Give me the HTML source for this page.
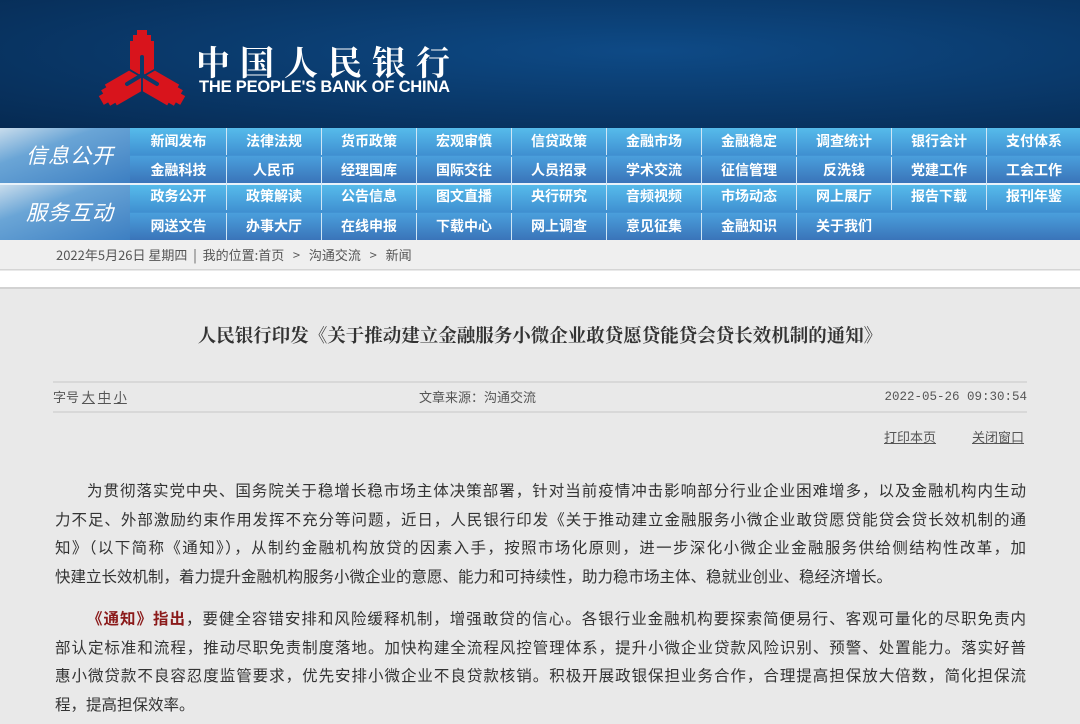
<!DOCTYPE html>
<html><head><meta charset="utf-8">
<style>
*{margin:0;padding:0;box-sizing:border-box}
body{width:1080px;height:724px;overflow:hidden;background:#e9e9e9;font-family:"Liberation Sans","Noto Sans CJK SC",sans-serif;color:#333}
.hdr{position:absolute;left:0;top:0;width:1080px;height:128px;background:radial-gradient(ellipse at 60% 40%,#0e4a86 0%,#0a3a6c 50%,#062a52 100%)}
.cn{position:absolute;left:196px;top:36px;color:#fff;font-family:"Noto Serif CJK SC",serif;font-size:34px;font-weight:bold;letter-spacing:10px;white-space:nowrap}
.en{position:absolute;left:199px;top:78px;color:#fff;font-size:16.5px;font-weight:bold;white-space:nowrap;letter-spacing:-0.2px}
.nav{position:absolute;left:0;width:1080px;height:55px;background:linear-gradient(#56bbeb,#3f8fd0 50%,#4a9fdc 51%,#3a74b9)}
.lbl{position:absolute;left:0;top:0;width:130px;height:55px;background:linear-gradient(160deg,#c8dcec 0%,#6aa5d6 35%,#3d7fc2 100%);color:#fff;font-size:21px;font-style:italic;line-height:55px;padding-left:26px;letter-spacing:1px;font-family:"Noto Sans CJK SC",sans-serif}
.cell{position:absolute;width:95px;height:27px;line-height:27px;text-align:center;color:#fff;font-size:14px;font-weight:bold;font-family:"Noto Sans CJK SC",sans-serif;border-left:1px solid #cfe6f6}
.crumb{position:absolute;left:0;top:240px;width:1080px;height:30px;background:#efefef;border-bottom:1px solid #d5d5d5;font-size:13px;color:#555;line-height:30px;padding-left:56px;font-family:"Noto Sans CJK SC",sans-serif}
.white{position:absolute;left:0;top:271px;width:1080px;height:18px;background:#fff;border-bottom:2px solid #d2d2d2}
.title{position:absolute;left:0;top:322px;width:1080px;text-align:center;font-family:"Noto Serif CJK SC",serif;font-weight:bold;font-size:18.5px;color:#333}
.meta{position:absolute;left:53px;top:381px;width:974px;height:32px;border-top:2px solid #d8d8d8;border-bottom:2px solid #d8d8d8;font-size:13px;color:#555;line-height:28px;font-family:"Noto Sans CJK SC",sans-serif}
.links{position:absolute;top:427px;font-size:13px;color:#555;text-decoration:underline;font-family:"Noto Sans CJK SC",sans-serif}
.p{position:absolute;left:55px;width:971px;font-family:"Noto Sans CJK SC",sans-serif;font-size:15.5px;color:#333}
.p div{height:28.5px;line-height:28.5px;text-align:justify;text-align-last:justify;white-space:nowrap;overflow:hidden}
.p div.l{text-align-last:left}
b.r{color:#8b1a1a}
</style></head><body>
<div class="hdr">
<svg style="position:absolute;left:95px;top:27px" width="95" height="85" viewBox="-47 -50 95 85">
<g fill="#d8141c">
<path id="a" d="M-5,-47 H5 V-42 H9 V-36 H12 V-8 L0,-1 L-12,-8 V-36 H-9 V-42 H-5 Z"/>
<use href="#a" transform="rotate(120)"/>
<use href="#a" transform="rotate(240)"/>
</g>
<g stroke="#0b3a6a" stroke-width="4" stroke-linecap="round" fill="none">
<path d="M0,-2 V-20"/><path d="M0,-2 L15,7"/><path d="M0,-2 L-15,7"/>
</g>
</svg>
<div class="cn">中国人民银行</div>
<div class="en">THE PEOPLE'S BANK OF CHINA</div>
</div>

<div class="nav" style="top:128px"><div class="lbl">信息公开</div>
<div class="cell" style="left:131px;top:0;border-left:none">新闻发布</div><div class="cell" style="left:226px;top:0">法律法规</div><div class="cell" style="left:321px;top:0">货币政策</div><div class="cell" style="left:416px;top:0">宏观审慎</div><div class="cell" style="left:511px;top:0">信贷政策</div><div class="cell" style="left:606px;top:0">金融市场</div><div class="cell" style="left:701px;top:0">金融稳定</div><div class="cell" style="left:796px;top:0">调查统计</div><div class="cell" style="left:891px;top:0">银行会计</div><div class="cell" style="left:986px;top:0">支付体系</div>
<div class="cell" style="left:131px;top:29px;border-left:none">金融科技</div><div class="cell" style="left:226px;top:29px">人民币</div><div class="cell" style="left:321px;top:29px">经理国库</div><div class="cell" style="left:416px;top:29px">国际交往</div><div class="cell" style="left:511px;top:29px">人员招录</div><div class="cell" style="left:606px;top:29px">学术交流</div><div class="cell" style="left:701px;top:29px">征信管理</div><div class="cell" style="left:796px;top:29px">反洗钱</div><div class="cell" style="left:891px;top:29px">党建工作</div><div class="cell" style="left:986px;top:29px">工会工作</div>
</div>
<div style="position:absolute;left:0;top:183px;width:1080px;height:2px;background:#e8f2fa"></div>
<div class="nav" style="top:185px"><div class="lbl">服务互动</div>
<div class="cell" style="left:131px;top:-2px;border-left:none">政务公开</div><div class="cell" style="left:226px;top:-2px">政策解读</div><div class="cell" style="left:321px;top:-2px">公告信息</div><div class="cell" style="left:416px;top:-2px">图文直播</div><div class="cell" style="left:511px;top:-2px">央行研究</div><div class="cell" style="left:606px;top:-2px">音频视频</div><div class="cell" style="left:701px;top:-2px">市场动态</div><div class="cell" style="left:796px;top:-2px">网上展厅</div><div class="cell" style="left:891px;top:-2px">报告下载</div><div class="cell" style="left:986px;top:-2px">报刊年鉴</div>
<div class="cell" style="left:131px;top:28px;border-left:none">网送文告</div><div class="cell" style="left:226px;top:28px">办事大厅</div><div class="cell" style="left:321px;top:28px">在线申报</div><div class="cell" style="left:416px;top:28px">下载中心</div><div class="cell" style="left:511px;top:28px">网上调查</div><div class="cell" style="left:606px;top:28px">意见征集</div><div class="cell" style="left:701px;top:28px">金融知识</div><div class="cell" style="left:796px;top:28px">关于我们</div>
</div>

<div class="crumb">2022年5月26日 星期四 &nbsp;|&nbsp; 我的位置:首页 &nbsp;&nbsp;&gt;&nbsp;&nbsp; 沟通交流 &nbsp;&nbsp;&gt;&nbsp;&nbsp; 新闻</div>
<div class="white"></div>

<div class="title">人民银行印发《关于推动建立金融服务小微企业敢贷愿贷能贷会贷长效机制的通知》</div>
<div class="meta"><span style="position:absolute;left:0">字号 <u>大</u> <u>中</u> <u>小</u></span><span style="position:absolute;left:366px">文章来源：沟通交流</span><span style="position:absolute;right:0;font-family:'Liberation Mono',monospace;font-size:12.5px">2022-05-26 09:30:54</span></div>
<div class="links" style="left:884px">打印本页</div>
<div class="links" style="left:972px">关闭窗口</div>

<div class="p" style="top:476px">
<div>&emsp;&emsp;为贯彻落实党中央、国务院关于稳增长稳市场主体决策部署，针对当前疫情冲击影响部分行业企业困难增多，以及金融机构内生动</div>
<div>力不足、外部激励约束作用发挥不充分等问题，近日，人民银行印发《关于推动建立金融服务小微企业敢贷愿贷能贷会贷长效机制的通</div>
<div>知》（以下简称《通知》），从制约金融机构放贷的因素入手，按照市场化原则，进一步深化小微企业金融服务供给侧结构性改革，加</div>
<div class="l">快建立长效机制，着力提升金融机构服务小微企业的意愿、能力和可持续性，助力稳市场主体、稳就业创业、稳经济增长。</div>
</div>
<div class="p" style="top:604px">
<div>&emsp;&emsp;<b class="r">《通知》指出</b>，要健全容错安排和风险缓释机制，增强敢贷的信心。各银行业金融机构要探索简便易行、客观可量化的尽职免责内</div>
<div>部认定标准和流程，推动尽职免责制度落地。加快构建全流程风控管理体系，提升小微企业贷款风险识别、预警、处置能力。落实好普</div>
<div>惠小微贷款不良容忍度监管要求，优先安排小微企业不良贷款核销。积极开展政银保担业务合作，合理提高担保放大倍数，简化担保流</div>
<div class="l">程，提高担保效率。</div>
</div>
</body></html>
